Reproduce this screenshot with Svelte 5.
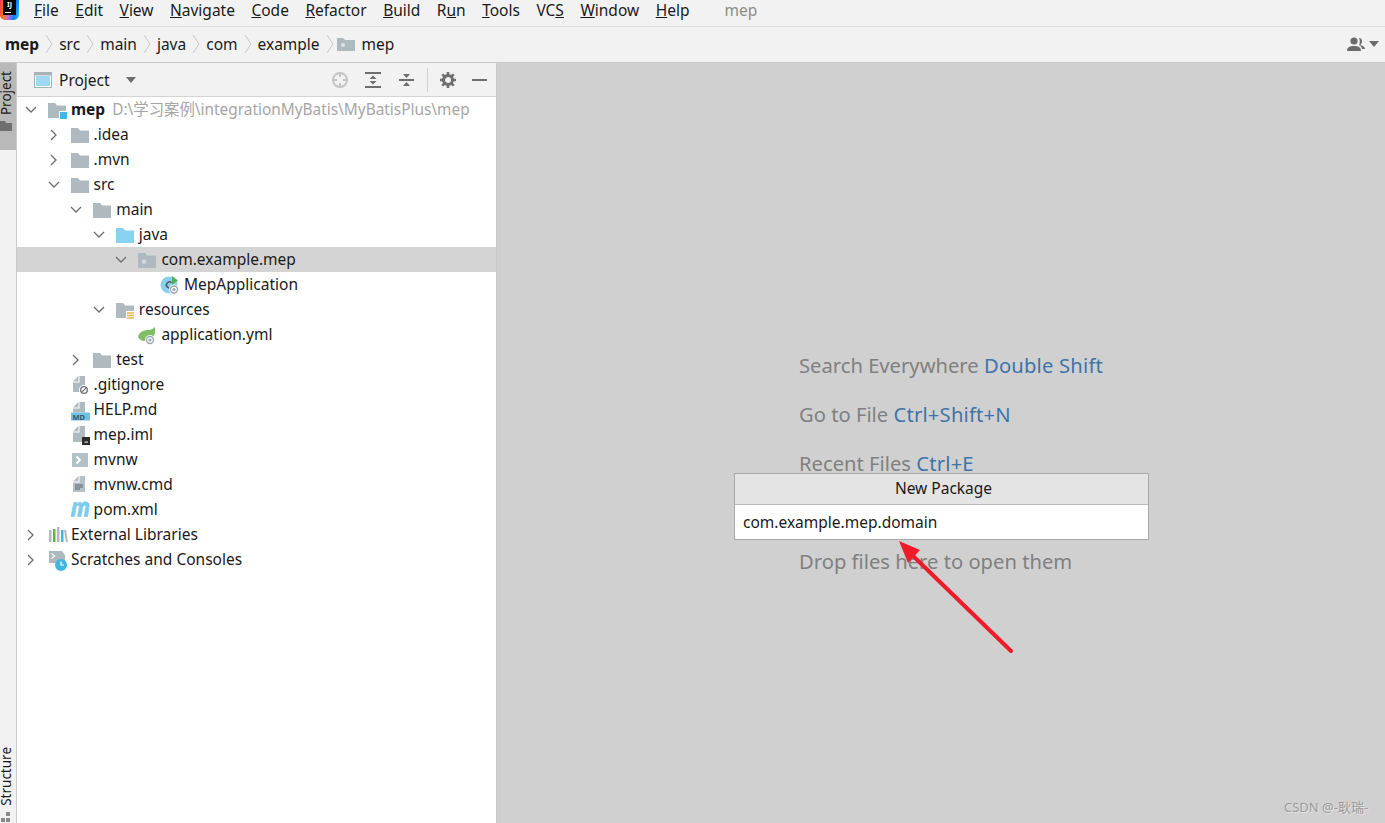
<script>
  const menus = [
    { pre: '', key: 'F', post: 'ile' },
    { pre: '', key: 'E', post: 'dit' },
    { pre: '', key: 'V', post: 'iew' },
    { pre: '', key: 'N', post: 'avigate' },
    { pre: '', key: 'C', post: 'ode' },
    { pre: '', key: 'R', post: 'efactor' },
    { pre: '', key: 'B', post: 'uild' },
    { pre: 'R', key: 'u', post: 'n' },
    { pre: '', key: 'T', post: 'ools' },
    { pre: 'VC', key: 'S', post: '' },
    { pre: '', key: 'W', post: 'indow' },
    { pre: '', key: 'H', post: 'elp' }
  ];

  const crumbs = ['src', 'main', 'java', 'com', 'example'];

  const rows = [
    { depth: 0, open: true, icon: 'module', name: 'mep', bold: true, hint: 'D:\\学习案例\\integrationMyBatis\\MyBatisPlus\\mep' },
    { depth: 1, open: false, icon: 'folder', name: '.idea' },
    { depth: 1, open: false, icon: 'folder', name: '.mvn' },
    { depth: 1, open: true, icon: 'folder', name: 'src' },
    { depth: 2, open: true, icon: 'folder', name: 'main' },
    { depth: 3, open: true, icon: 'source', name: 'java' },
    { depth: 4, open: true, icon: 'package', name: 'com.example.mep', selected: true },
    { depth: 5, icon: 'app', name: 'MepApplication' },
    { depth: 3, open: true, icon: 'resources', name: 'resources' },
    { depth: 4, icon: 'yaml', name: 'application.yml' },
    { depth: 2, open: false, icon: 'folder', name: 'test' },
    { depth: 1, icon: 'ignore', name: '.gitignore' },
    { depth: 1, icon: 'md', name: 'HELP.md' },
    { depth: 1, icon: 'iml', name: 'mep.iml' },
    { depth: 1, icon: 'shell', name: 'mvnw' },
    { depth: 1, icon: 'text', name: 'mvnw.cmd' },
    { depth: 1, icon: 'maven', name: 'pom.xml' },
    { depth: 0, open: false, icon: 'libs', name: 'External Libraries' },
    { depth: 0, open: false, icon: 'scratch', name: 'Scratches and Consoles' }
  ];

  const hints = [
    { label: 'Search Everywhere', keys: 'Double Shift' },
    { label: 'Go to File', keys: 'Ctrl+Shift+N' },
    { label: 'Recent Files', keys: 'Ctrl+E' },
    { label: 'Drop files here to open them', keys: '' }
  ];

  const folderPath = 'M1 3h7l2 2.500h9V18H1z';
  const docBody = 'M9.500 1H15v16H3V7.500h6.500z';
  const docFold = 'M8.500 1v5.500H3z';
</script>

{#snippet gear(x, y, r)}
  <circle cx={x} cy={y} r={r} fill="#fff" />
  <circle cx={x} cy={y} r={r - 0.8} fill="#9aa7b0" />
  <circle cx={x} cy={y} r={r - 2.2} fill="#fff" />
  <circle cx={x} cy={y} r={r - 3.4} fill="#9aa7b0" />
{/snippet}

{#snippet treeIcon(kind)}
  <svg class="ticon" viewBox="0 0 20 20" width="20" height="20">
    {#if kind === 'folder'}
      <path d={folderPath} fill="#aeb9c0" />
    {:else if kind === 'module'}
      <path d={folderPath} fill="#aeb9c0" />
      <rect x="12" y="11" width="9" height="9" fill="#fff" />
      <rect x="13" y="12" width="7" height="7" fill="#40b6e0" />
    {:else if kind === 'source'}
      <path d={folderPath} fill="#88d4f0" />
    {:else if kind === 'package'}
      <path d={folderPath} fill="#aeb9c0" />
      <circle cx="7" cy="11.500" r="2.200" fill="#d6dadd" />
    {:else if kind === 'resources'}
      <path d={folderPath} fill="#aeb9c0" />
      <rect x="11" y="11" width="9" height="10" fill="#fff" />
      <path d="M12 13h7M12 15.500h7M12 18h7" stroke="#e8b552" stroke-width="1.500" />
    {:else if kind === 'app'}
      <circle cx="9" cy="10" r="8.500" fill="#88d0ec" />
      <path d="M11.500 7.800A3 3 0 1 0 11.500 12.200" fill="none" stroke="#4a5a66" stroke-width="1.500" />
      <path d="M12 1l6 4.500-6 4.500z" fill="#52b05a" />
      {@render gear(14, 14.500, 5)}
    {:else if kind === 'yaml'}
      <path d="M1 12C2 6 8 5 12 5c2 0 4-1 6-3 1 7-2 13-9 14-4 .5-6-1-8-4z" fill="#7dbd63" />
      {@render gear(13, 15, 5)}
    {:else if kind === 'ignore'}
      <path d={docBody} fill="#aeb9c0" />
      <path d={docFold} fill="#aeb9c0" />
      <circle cx="14" cy="15" r="5" fill="#fff" />
      <circle cx="14" cy="15" r="3.300" fill="none" stroke="#6e6e6e" stroke-width="1.300" />
      <path d="M11.800 17.200l4.400-4.400" stroke="#6e6e6e" stroke-width="1.200" />
    {:else if kind === 'md'}
      <path d="M9.500 2H15v10.500H3V8.500h6.500z" fill="#aeb9c0" />
      <path d="M8.500 2v5.500H3z" fill="#aeb9c0" />
      <rect x="1" y="12.500" width="19" height="8" fill="#6fc2e4" />
      <text x="2.500" y="19.500" class="md">MD</text>
    {:else if kind === 'iml'}
      <path d={docBody} fill="#aeb9c0" />
      <path d={docFold} fill="#aeb9c0" />
      <rect x="12" y="12" width="8" height="8" fill="#2b2b2b" />
      <rect x="14.500" y="16.500" width="3.500" height="1.200" fill="#ddd" />
    {:else if kind === 'shell'}
      <rect x="2" y="3" width="16" height="14" fill="#b5bfc6" />
      <path d="M6.500 6.500l3.500 3.500-3.500 3.500" fill="none" stroke="#fff" stroke-width="1.800" />
    {:else if kind === 'text'}
      <path d={docBody} fill="#b5bfc6" />
      <path d={docFold} fill="#b5bfc6" />
      <path d="M5 10h8M5 12h8M5 14h5" stroke="#5c6670" stroke-width="1" />
    {:else if kind === 'maven'}
      <path transform="translate(0 -6) scale(1.100 1.400)" d="M1 16L3.500 6h3L6 8c1-2 4-3 5-1 1-2 6-2 6.500 1L16 16h-3l1.500-7c0-1.500-2.500-1-3 .5L10 16H7l1.500-7c0-1.500-2.500-1-3 .5L4 16z" fill="#7dcbed" stroke="#7dcbed" stroke-width="0.600" />
    {:else if kind === 'libs'}
      <rect x="2" y="5" width="2.500" height="12" fill="#b0bbc2" />
      <rect x="6" y="4" width="2.500" height="13" fill="#62b543" />
      <rect x="10" y="2" width="2.500" height="15" fill="#b0bbc2" />
      <rect x="14" y="5" width="2.500" height="12" fill="#40b6e0" />
      <path d="M18 5l2 12" stroke="#b0bbc2" stroke-width="2" />
    {:else if kind === 'scratch'}
      <path d="M2 1h13l3 4v8H2z" fill="#aeb9c0" />
      <path d="M4.500 3.500l3 2.500-3 2.500" fill="none" stroke="#fff" stroke-width="1.300" />
      <circle cx="14" cy="15" r="6" fill="#40b6e0" />
      <path d="M14 11.500V15h3" fill="none" stroke="#fff" stroke-width="1.200" />
    {/if}
  </svg>
{/snippet}

<div class="ide">
  <header class="menubar">
    <div class="logo"><span>IJ</span><i></i></div>
    <nav class="menus">
      {#each menus as m}
        <span>{m.pre}<u>{m.key}</u>{m.post}</span>
      {/each}
    </nav>
    <span class="title">mep</span>
  </header>

  <div class="crumbs">
    <b>mep</b>
    {#each crumbs as c}
      <svg class="sep" viewBox="0 0 8 24" width="8" height="24"><path d="M1 3l6 9-6 9" fill="none" stroke="#c8c8c8" /></svg>
      <span>{c}</span>
    {/each}
    <svg class="sep" viewBox="0 0 8 24" width="8" height="24"><path d="M1 3l6 9-6 9" fill="none" stroke="#c8c8c8" /></svg>
    <svg class="crumbfolder" viewBox="0 0 18 14" width="18" height="14">
      <path d="M0 1h6l2 2h10v11H0z" fill="#aeb9c0" /><circle cx="6" cy="8" r="2" fill="#dfe3e6" />
    </svg>
    <span>mep</span>
    <div class="vcs">
      <svg viewBox="0 0 18 14" width="18" height="14">
        <circle cx="7" cy="4" r="3.600" fill="#6b6b6b" />
        <path d="M0 14c0-4 3-5 7-5s7 1 7 5z" fill="#6b6b6b" />
        <path d="M12 1c2 0 3 1.500 3 3.500S13.500 8 13 8c2 .5 5 1.500 5 4h-3c0-2-1.500-3-3-4 1-1 1-5 0-7z" fill="#6b6b6b" />
      </svg>
      <svg viewBox="0 0 10 6" width="10" height="6"><path d="M0 0h10L5 6z" fill="#6b6b6b" /></svg>
    </div>
  </div>

  <main class="body">
    <aside class="stripe">
      <div class="tab active">
        <span class="vtext">Project</span>
        <svg viewBox="0 0 12 12" width="12" height="12"><path d="M0 1h5l1 2h6v8H0z" fill="#6e6e6e" /></svg>
      </div>
      <div class="tab">
        <span class="vtext">Structure</span>
        <svg viewBox="0 0 12 12" width="12" height="12"><path d="M6 1h4v4H6zM1 7h4v4H1zM6 7h4v4H6z" fill="#8a8a8a" /></svg>
      </div>
    </aside>

    <section class="panel">
      <div class="panelhead">
        <svg viewBox="0 0 18 18" width="18" height="18">
          <rect x="0.500" y="1.500" width="17" height="15" fill="#fff" stroke="#a8b2b9" />
          <rect x="0.500" y="1.500" width="17" height="3" fill="#a8b2b9" />
          <rect x="2" y="5" width="14" height="10" fill="#9fd8f0" />
        </svg>
        <span class="ptitle">Project</span>
        <svg class="caret" viewBox="0 0 10 6" width="10" height="6"><path d="M0 0h10L5 6z" fill="#6e6e6e" /></svg>
        <div class="tools">
          <svg viewBox="0 0 18 18" width="18" height="18">
            <circle cx="9" cy="9" r="7" fill="none" stroke="#c4c4c4" stroke-width="2" />
            <path d="M9 1v5M9 12v5M1 9h5M12 9h5" stroke="#c4c4c4" stroke-width="2" />
          </svg>
          <svg viewBox="0 0 18 18" width="18" height="18">
            <path d="M1 2h16M1 16h16" stroke="#6e6e6e" stroke-width="2" />
            <path d="M9 4.500L12.500 8h-7zM9 13.500L5.500 10h7z" fill="#6e6e6e" />
          </svg>
          <svg viewBox="0 0 18 18" width="18" height="18">
            <path d="M2 9h15" stroke="#6e6e6e" stroke-width="2" />
            <path d="M9.500 7L6 3h7zM9.500 11L13 15H6z" fill="#6e6e6e" />
          </svg>
          <span class="divider"></span>
          <svg viewBox="0 0 18 18" width="18" height="18">
            <circle cx="9" cy="9" r="4.500" fill="none" stroke="#6e6e6e" stroke-width="3" />
            <path d="M9 1v3M9 14v3M1 9h3M14 9h3M3.300 3.300l2.200 2.200M12.500 12.500l2.200 2.200M14.700 3.300l-2.200 2.200M5.500 12.500l-2.200 2.200" stroke="#6e6e6e" stroke-width="2.600" />
          </svg>
          <svg viewBox="0 0 16 18" width="16" height="18"><path d="M0 9h15" stroke="#6e6e6e" stroke-width="2" /></svg>
        </div>
      </div>

      <ul class="tree">
        {#each rows as r}
          <li class="row" class:selected={r.selected} style={`padding-left:${7 + r.depth * 22.6}px`}>
            <span class="arrow">
              {#if r.open === true}
                <svg viewBox="0 0 12 8" width="12" height="8"><path d="M1 1l5 5 5-5" fill="none" stroke="#6e6e6e" stroke-width="1.300" /></svg>
              {:else if r.open === false}
                <svg viewBox="0 0 8 12" width="8" height="12"><path d="M1 1l5 5-5 5" fill="none" stroke="#6e6e6e" stroke-width="1.300" /></svg>
              {/if}
            </span>
            {@render treeIcon(r.icon)}
            <span class="name" class:bold={r.bold}>{r.name}</span>
            {#if r.hint}<span class="path">{r.hint}</span>{/if}
          </li>
        {/each}
      </ul>
    </section>

    <section class="editor">
      {#each hints as h}
        <p class="hint">{h.label} {#if h.keys}<span>{h.keys}</span>{/if}</p>
      {/each}

      <div class="popup">
        <div class="popuphead">New Package</div>
        <div class="popupfield">com.example.mep.domain</div>
      </div>
    </section>
  </main>

  <svg class="pointer" viewBox="0 0 130 125" width="130" height="125">
    <path d="M115 112L12 12" stroke="#ee1c2b" stroke-width="4" stroke-linecap="round" />
    <path d="M3 2L24 11 12 24z" fill="#ee1c2b" />
  </svg>

  <span class="mark">CSDN @-耿瑞-</span>
</div>

<style>
  :global(body) {
    margin: 0;
    overflow: hidden;
  }

  .ide {
    position: relative;
    width: 1385px;
    height: 823px;
    display: flex;
    flex-direction: column;
    background: #f2f2f2;
    color: #1a1a1a;
    font-family: 'Noto Sans', 'Noto Sans CJK SC', sans-serif;
    font-size: 15.500px;
    overflow: hidden;
  }

  .menubar {
    height: 27px;
    flex-shrink: 0;
    display: flex;
    align-items: center;
    border-bottom: 1px solid #dcdcdc;
    box-sizing: border-box;
  }

  .logo {
    position: relative;
    width: 19px;
    height: 20px;
    margin-top: -6px;
    border-radius: 0 0 5px 5px;
    background: linear-gradient(100deg, #fe315d 0%, #f97a12 25%, #c06bd0 50%, #087cfa 75%, #35d0f0 100%);
  }

  .logo span {
    position: absolute;
    left: 3px;
    top: 0;
    width: 13px;
    height: 15px;
    background: #000;
    color: #fff;
    font-size: 7px;
    font-weight: 700;
    line-height: 10px;
    text-align: center;
  }

  .logo i {
    position: absolute;
    left: 5px;
    top: 12px;
    width: 6px;
    height: 1px;
    background: #fff;
  }

  .menus {
    display: flex;
    gap: 16.500px;
    margin-left: 15px;
    margin-top: -6px;
    line-height: 20px;
  }

  .title {
    margin-left: 35px;
    margin-top: -6px;
    color: #8c8c8c;
  }

  .crumbs {
    height: 36px;
    flex-shrink: 0;
    display: flex;
    align-items: center;
    gap: 6px;
    padding: 0 0 2px 5px;
    border-bottom: 1px solid #c9c9c9;
    box-sizing: border-box;
  }

  .crumbs b {
    font-weight: 700;
  }

  .crumbfolder {
    margin-left: -3px;
    margin-right: 1px;
  }

  .vcs {
    margin-left: auto;
    margin-right: 6px;
    display: flex;
    align-items: center;
    gap: 4px;
  }

  .body {
    flex: 1;
    display: flex;
    min-height: 0;
  }

  .stripe {
    width: 17px;
    flex-shrink: 0;
    display: flex;
    flex-direction: column;
    justify-content: space-between;
    border-right: 1px solid #c9c9c9;
    box-sizing: border-box;
    background: #f2f2f2;
  }

  .tab {
    display: flex;
    flex-direction: column;
    align-items: flex-start;
    gap: 5px;
    font-size: 13.500px;
    line-height: 13px;
  }

  .tab svg {
    flex-shrink: 0;
  }

  .tab.active {
    height: 87px;
    padding-top: 8px;
    box-sizing: border-box;
    background: #b9b9b9;
  }

  .vtext {
    writing-mode: vertical-rl;
    transform: rotate(180deg);
  }

  .panel {
    width: 480px;
    flex-shrink: 0;
    background: #fff;
    border-right: 1px solid #c9c9c9;
    box-sizing: border-box;
  }

  .panelhead {
    height: 34px;
    display: flex;
    align-items: center;
    padding: 0 8px 0 17px;
    background: #f2f2f2;
    border-bottom: 1px solid #d4d4d4;
    box-sizing: border-box;
  }

  .ptitle {
    margin-left: 7px;
  }

  .caret {
    margin-left: 16px;
  }

  .tools {
    margin-left: auto;
    display: flex;
    align-items: center;
    gap: 15px;
  }

  .divider {
    width: 1px;
    height: 24px;
    background: #d0d0d0;
    margin: 0 -4px 0 -3px;
  }

  .tree {
    list-style: none;
    margin: 0;
    padding: 0;
  }

  .row {
    height: 25px;
    display: flex;
    align-items: center;
    box-sizing: border-box;
  }

  .row.selected {
    background: #d4d4d4;
  }

  .name,
  .path {
    position: relative;
    top: -1px;
  }

  .arrow {
    width: 16px;
    height: 16px;
    margin-left: -1px;
    margin-right: 8px;
    display: flex;
    align-items: center;
    justify-content: center;
    flex-shrink: 0;
  }

  .ticon {
    flex-shrink: 0;
    margin-right: 4px;
    overflow: visible;
  }

  .md {
    font-size: 7.500px;
    font-weight: 700;
    fill: #39596b;
  }

  .bold {
    font-weight: 700;
  }

  .path {
    margin-left: 7px;
    font-size: 15.400px;
    color: #a6a6a6;
  }

  .editor {
    position: relative;
    flex: 1;
    background: #d0d0d0;
    padding: 288px 0 0 302px;
    box-sizing: border-box;
  }

  .hint {
    margin: 0 0 21px;
    font-size: 20.200px;
    line-height: 28px;
    color: #808080;
  }

  .hint:last-of-type {
    margin-top: 70px;
  }

  .hint span {
    color: #3f74a8;
    letter-spacing: 0.2px;
  }

  .popup {
    position: absolute;
    left: 237px;
    top: 410px;
    width: 415px;
    height: 67px;
    box-sizing: border-box;
    border: 1px solid #a9a9a9;
    background: #fff;
  }

  .popuphead {
    height: 31px;
    padding-left: 4px;
    text-align: center;
    line-height: 29px;
    background: #e4e4e4;
    border-bottom: 1px solid #bcbcbc;
    box-sizing: border-box;
  }

  .popupfield {
    padding-left: 8px;
    line-height: 35px;
  }

  .pointer {
    position: absolute;
    left: 896px;
    top: 539px;
  }

  .mark {
    position: absolute;
    left: 1284px;
    top: 797px;
    font-size: 13px;
    color: #9a9a9a;
    text-shadow: 1px 1px 0 #e6e6e6;
  }
</style>
